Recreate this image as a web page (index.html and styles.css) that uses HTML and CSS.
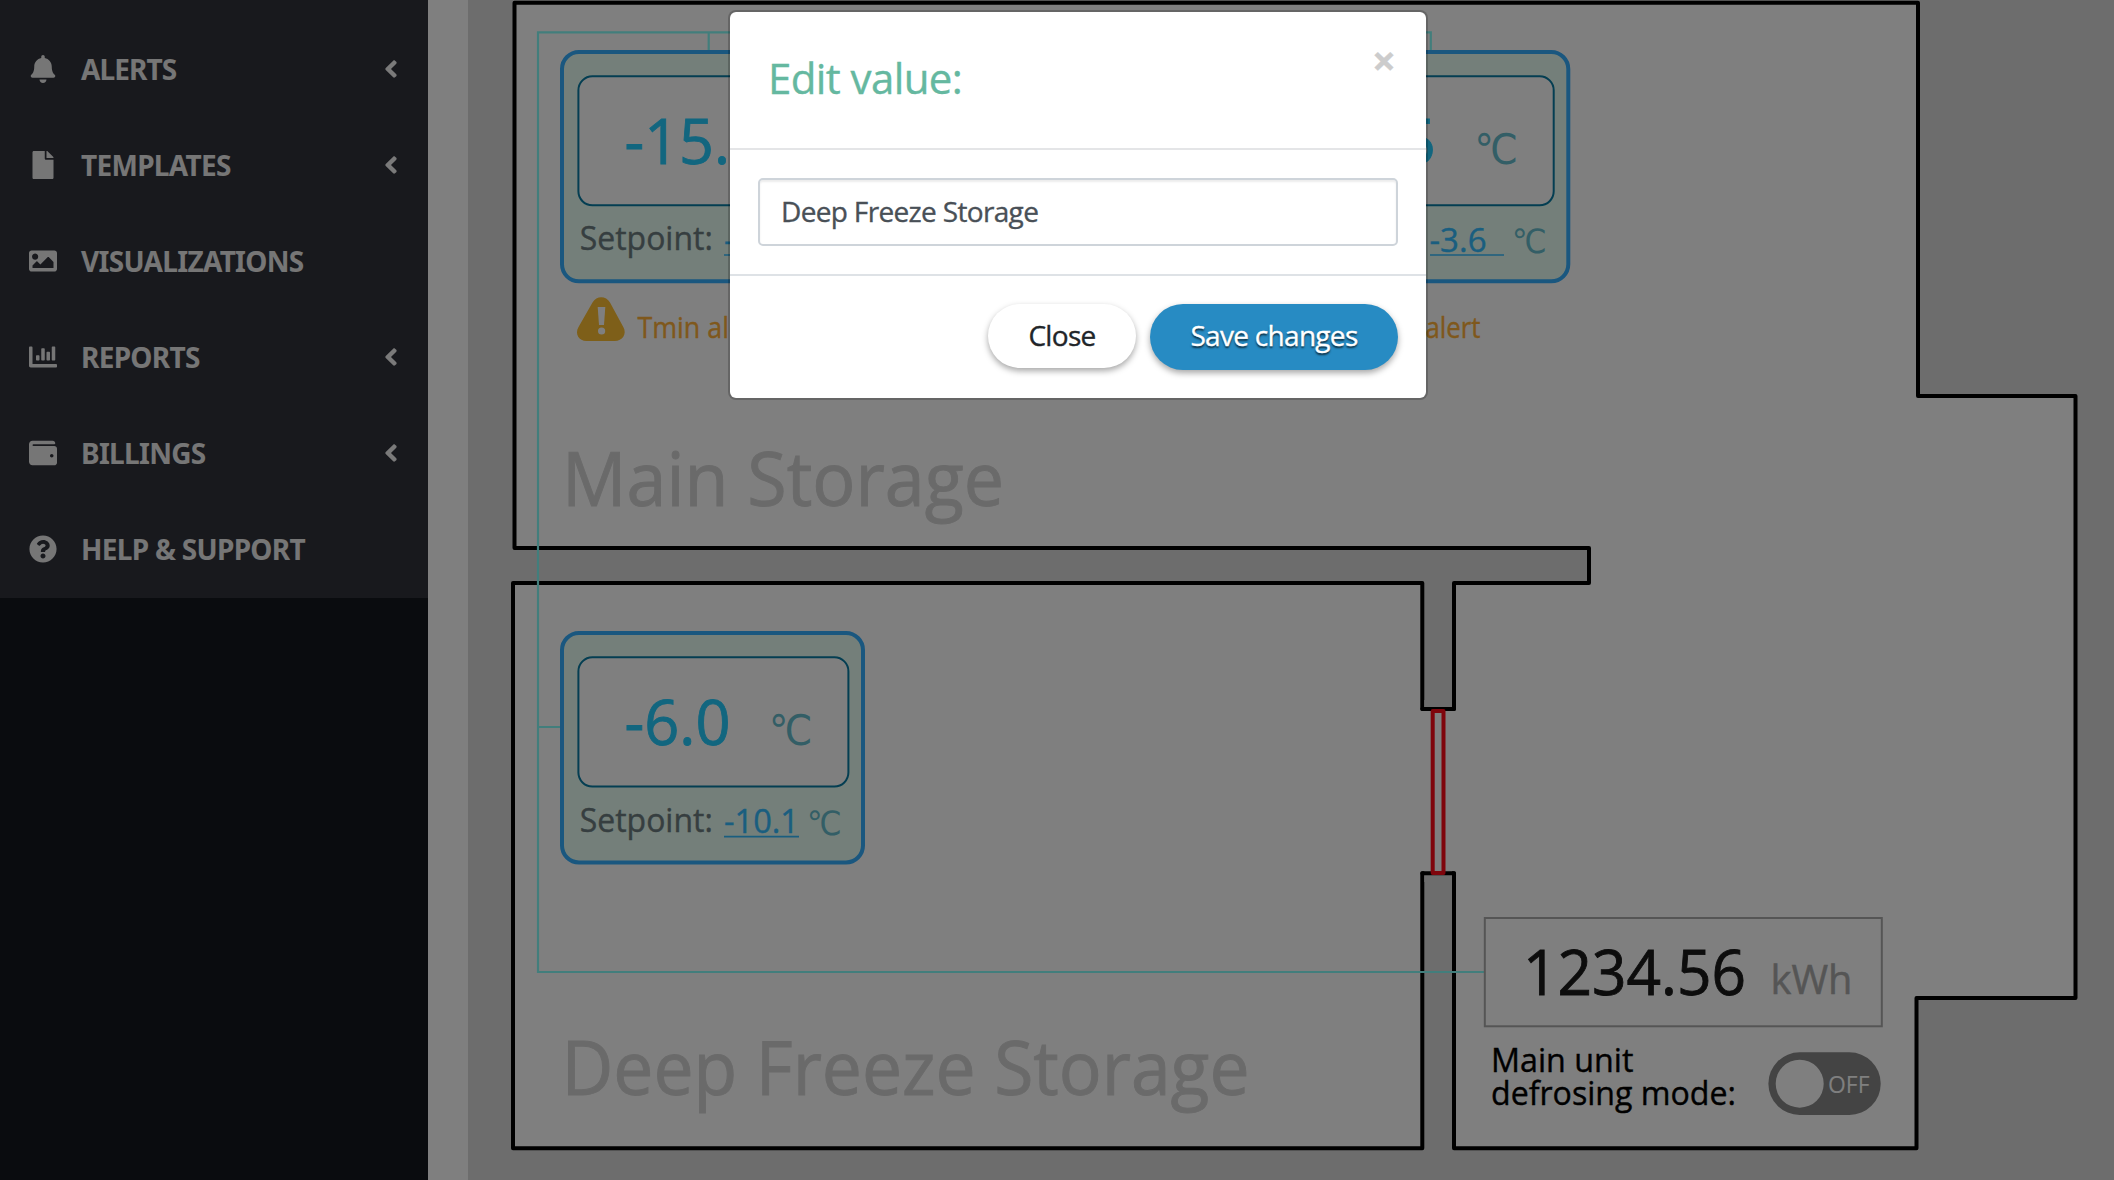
FILE: index.html
```html
<!DOCTYPE html>
<html lang="en">
<head>
<meta charset="utf-8">
<title>Visualizations</title>
<link rel="stylesheet" href="styles.css">
</head>
<body>
<div class="app">
  <aside class="sidebar">
    <nav class="menu">
      <a class="menu-item"><svg class="menu-icon" viewBox="0 0 448 512"><path d="M224 512c35.32 0 63.97-28.65 63.97-64H160.03c0 35.35 28.65 64 63.97 64zm215.39-149.71c-19.32-20.76-55.47-51.99-55.47-154.29 0-77.7-54.48-139.9-127.94-155.16V32c0-17.67-14.32-32-31.98-32s-31.98 14.33-31.98 32v20.84C118.56 68.1 64.08 130.3 64.08 208c0 102.3-36.15 133.53-55.47 154.29-6 6.45-8.66 14.16-8.61 21.71.11 16.4 12.98 32 32.1 32h383.8c19.12 0 32-15.6 32.1-32 .05-7.55-2.61-15.27-8.61-21.71z"/></svg><span class="menu-label menu-label-tight">ALERTS</span><svg class="chevron" viewBox="0 0 256 512"><path d="M31.7 239l136-136c9.4-9.4 24.6-9.4 33.9 0l22.6 22.6c9.4 9.4 9.4 24.6 0 33.9L127.9 256l96.4 96.4c9.4 9.4 9.4 24.6 0 33.9L201.7 409c-9.4 9.4-24.6 9.4-33.9 0l-136-136c-9.5-9.4-9.5-24.6-.1-34z"/></svg></a>
      <a class="menu-item"><svg class="menu-icon" viewBox="0 0 384 512"><path d="M224 136V0H24C10.7 0 0 10.7 0 24v464c0 13.3 10.7 24 24 24h336c13.3 0 24-10.7 24-24V160H248c-13.2 0-24-10.8-24-24zm160-14.1v6.1H256V0h6.1c6.4 0 12.5 2.5 17 7l97.9 98c4.5 4.5 7 10.6 7 16.9z"/></svg><span class="menu-label">TEMPLATES</span><svg class="chevron" viewBox="0 0 256 512"><path d="M31.7 239l136-136c9.4-9.4 24.6-9.4 33.9 0l22.6 22.6c9.4 9.4 9.4 24.6 0 33.9L127.9 256l96.4 96.4c9.4 9.4 9.4 24.6 0 33.9L201.7 409c-9.4 9.4-24.6 9.4-33.9 0l-136-136c-9.5-9.4-9.5-24.6-.1-34z"/></svg></a>
      <a class="menu-item"><svg class="menu-icon" viewBox="0 0 512 512"><path d="M464 448H48c-26.51 0-48-21.49-48-48V112c0-26.51 21.49-48 48-48h416c26.51 0 48 21.49 48 48v288c0 26.51-21.49 48-48 48zM112 120c-30.928 0-56 25.072-56 56s25.072 56 56 56 56-25.072 56-56-25.072-56-56-56zM64 384h384V272l-87.515-87.515c-4.686-4.686-12.284-4.686-16.971 0L208 320l-55.515-55.515c-4.686-4.686-12.284-4.686-16.971 0L64 336v48z"/></svg><span class="menu-label">VISUALIZATIONS</span></a>
      <a class="menu-item"><svg class="menu-icon" viewBox="0 0 512 512"><path d="M332.8 320h38.4c6.4 0 12.8-6.4 12.8-12.8V172.8c0-6.4-6.4-12.8-12.8-12.8h-38.4c-6.4 0-12.8 6.4-12.8 12.8v134.4c0 6.4 6.4 12.8 12.8 12.8zm96 0h38.4c6.4 0 12.8-6.4 12.8-12.8V76.8c0-6.4-6.4-12.8-12.8-12.8h-38.4c-6.4 0-12.8 6.4-12.8 12.8v230.4c0 6.4 6.4 12.8 12.8 12.8zm-288 0h38.4c6.4 0 12.8-6.4 12.8-12.8v-70.4c0-6.4-6.4-12.8-12.8-12.8h-38.4c-6.4 0-12.8 6.4-12.8 12.8v70.4c0 6.4 6.4 12.8 12.8 12.8zm96 0h38.4c6.4 0 12.8-6.4 12.8-12.8V108.8c0-6.4-6.4-12.8-12.8-12.8h-38.4c-6.4 0-12.8 6.4-12.8 12.8v198.4c0 6.4 6.4 12.8 12.8 12.8zM496 384H64V80c0-8.84-7.16-16-16-16H16C7.16 64 0 71.16 0 80v336c0 17.67 14.33 32 32 32h464c8.84 0 16-7.16 16-16v-32c0-8.84-7.16-16-16-16z"/></svg><span class="menu-label">REPORTS</span><svg class="chevron" viewBox="0 0 256 512"><path d="M31.7 239l136-136c9.4-9.4 24.6-9.4 33.9 0l22.6 22.6c9.4 9.4 9.4 24.6 0 33.9L127.9 256l96.4 96.4c9.4 9.4 9.4 24.6 0 33.9L201.7 409c-9.4 9.4-24.6 9.4-33.9 0l-136-136c-9.5-9.4-9.5-24.6-.1-34z"/></svg></a>
      <a class="menu-item"><svg class="menu-icon" viewBox="0 0 512 512"><path d="M461.2 128H80c-8.84 0-16-7.16-16-16s7.16-16 16-16h384c8.84 0 16-7.16 16-16 0-26.51-21.49-48-48-48H64C28.65 32 0 60.65 0 96v320c0 35.35 28.65 64 64 64h397.2c28.02 0 50.8-21.53 50.8-48V176c0-26.47-22.78-48-50.8-48zM416 336c-17.67 0-32-14.33-32-32s14.33-32 32-32 32 14.33 32 32-14.33 32-32 32z"/></svg><span class="menu-label">BILLINGS</span><svg class="chevron" viewBox="0 0 256 512"><path d="M31.7 239l136-136c9.4-9.4 24.6-9.4 33.9 0l22.6 22.6c9.4 9.4 9.4 24.6 0 33.9L127.9 256l96.4 96.4c9.4 9.4 9.4 24.6 0 33.9L201.7 409c-9.4 9.4-24.6 9.4-33.9 0l-136-136c-9.5-9.4-9.5-24.6-.1-34z"/></svg></a>
      <a class="menu-item"><svg class="menu-icon" viewBox="0 0 512 512"><path d="M504 256c0 136.997-111.043 248-248 248S8 392.997 8 256C8 119.083 119.043 8 256 8s248 111.083 248 248zM262.655 90c-54.497 0-89.255 22.957-116.549 63.758-3.536 5.286-2.353 12.415 2.715 16.258l34.699 26.31c5.205 3.947 12.621 3.008 16.665-2.122 17.864-22.658 30.113-35.797 57.303-35.797 20.429 0 45.698 13.148 45.698 32.958 0 14.976-12.363 22.667-32.534 33.976C247.128 238.528 216 254.941 216 296v4c0 6.627 5.373 12 12 12h56c6.627 0 12-5.373 12-12v-1.333c0-28.462 83.186-29.647 83.186-106.667 0-58.002-60.165-102-116.531-102zM256 338c-25.365 0-46 20.635-46 46 0 25.364 20.635 46 46 46s46-20.636 46-46c0-25.364-20.635-46-46-46z"/></svg><span class="menu-label">HELP &amp; SUPPORT</span></a>
    </nav>
  </aside>
  <main class="content">
    <svg class="plan" viewBox="468 0 1646 1180">
      <!-- rooms -->
      <path class="room" d="M514.5 2.8H1918V396H2075.5V998H1916.5V1148.3H1454V873.3H1422.3V1148.3H513V583H1422.3V709H1454V583H1589V548H514.5Z"/>
      <path class="gap" d="M1424.3 707H1452V875H1424.3Z"/>
      <path class="pillar" d="M1424.3 700H1452V709H1424.3ZM1424.3 873.3H1452V882H1424.3Z"/>
      <path class="wall" d="M1422.3 709H1454M1422.3 873.3H1454"/>
      <path class="gap" d="M1420.3 711.2H1432V871H1420.3ZM1444 711.2H1456V871H1444Z"/>
      <rect class="door" x="1432.7" y="711" width="10.8" height="162"/>

      <!-- wiring -->
      <path class="wire" d="M1484 972H538V32.3H1430.8V51M708.7 32.3V51M538 727H561"/>

      <!-- thermostat 1 -->
      <g>
        <rect class="unit" x="562" y="52" width="301" height="229.3" rx="17"/>
        <rect class="display" x="578.4" y="76.3" width="270" height="129" rx="14"/>
        <text class="value" x="624.5" y="164" textLength="140.5" lengthAdjust="spacingAndGlyphs">-15.0</text>
        <text class="label" x="579.8" y="250" textLength="133" lengthAdjust="spacingAndGlyphs">Setpoint:</text>
        <text class="setpoint" x="724" y="252" textLength="75" lengthAdjust="spacingAndGlyphs">-18.0</text>
        <path class="underline" d="M724 255H799"/>
      </g>
      <path class="warn" d="M592.5 302.5c4-7 13.5-7 17.5 0l13.3 24.5c4 7-1 14-8.5 14h-28.3c-7.5 0-12-7-8-14z"/>
      <path class="mark" d="M597.7 307h7.6l-1.3 18h-5z"/>
      <circle class="mark" cx="601.6" cy="331" r="3.6"/>
      <text class="alert" x="637.5" y="337.7" textLength="127" lengthAdjust="spacingAndGlyphs">Tmin alert</text>

      <!-- thermostat 2 -->
      <g>
        <rect class="unit" x="1267.3" y="52" width="301" height="229.3" rx="17"/>
        <rect class="display" x="1283.7" y="76.3" width="270" height="129" rx="14"/>
        <text class="value" x="1329.5" y="164" textLength="106.5" lengthAdjust="spacingAndGlyphs">-3.5</text>
        <text class="unit-big" x="1474.5" y="164" textLength="43.5" lengthAdjust="spacingAndGlyphs">℃</text>
        <text class="label" x="1285" y="250" textLength="133" lengthAdjust="spacingAndGlyphs">Setpoint:</text>
        <text class="setpoint" x="1429.5" y="252" textLength="57" lengthAdjust="spacingAndGlyphs">-3.6</text>
        <path class="underline" d="M1430 255H1504"/>
        <text class="unit-small" x="1512" y="253" textLength="34.5" lengthAdjust="spacingAndGlyphs">℃</text>
      </g>
      <text class="alert" x="1353" y="337.7" textLength="127.5" lengthAdjust="spacingAndGlyphs">Tmax alert</text>

      <!-- thermostat 3 -->
      <g>
        <rect class="unit" x="562" y="633" width="301" height="229.5" rx="17"/>
        <rect class="display" x="578.4" y="657.3" width="270" height="129.3" rx="14"/>
        <text class="value" x="624.5" y="745" textLength="106" lengthAdjust="spacingAndGlyphs">-6.0</text>
        <text class="unit-big" x="769" y="745" textLength="43.5" lengthAdjust="spacingAndGlyphs">℃</text>
        <text class="label" x="579.8" y="832" textLength="133" lengthAdjust="spacingAndGlyphs">Setpoint:</text>
        <text class="setpoint" x="724" y="833" textLength="75" lengthAdjust="spacingAndGlyphs">-10.1</text>
        <path class="underline" d="M724 836.7H799"/>
        <text class="unit-small" x="807" y="835" textLength="34.5" lengthAdjust="spacingAndGlyphs">℃</text>
      </g>

      <text class="room-name" x="562" y="506" textLength="442" lengthAdjust="spacingAndGlyphs">Main Storage</text>
      <text class="room-name" x="561.5" y="1095" textLength="688" lengthAdjust="spacingAndGlyphs">Deep Freeze Storage</text>

      <!-- energy meter -->
      <rect class="meter" x="1484.8" y="918" width="397" height="108.3"/>
      <text class="meter-value" x="1523" y="995" textLength="223" lengthAdjust="spacingAndGlyphs">1234.56</text>
      <text class="meter-unit" x="1770.5" y="993.7" textLength="82" lengthAdjust="spacingAndGlyphs">kWh</text>

      <!-- defrost switch -->
      <text class="note" x="1491" y="1072" textLength="142.5" lengthAdjust="spacingAndGlyphs">Main unit</text>
      <text class="note" x="1491" y="1104.7" textLength="245" lengthAdjust="spacingAndGlyphs">defrosing mode:</text>
      <rect class="switch" x="1768.4" y="1052.3" width="112.3" height="62.7" rx="31.3"/>
      <circle class="knob" cx="1799.7" cy="1083.7" r="24"/>
      <text class="off" x="1828" y="1092.7" textLength="41.5" lengthAdjust="spacingAndGlyphs">OFF</text>
    </svg>
  </main>
</div>

<div class="backdrop">
  <div class="modal">
    <header class="modal-header">
      <h4 class="modal-title">Edit value:</h4>
      <span class="close">×</span>
    </header>
    <div class="modal-body"><input class="field" type="text" value="Deep Freeze Storage"></div>
    <footer class="modal-footer">
      <button class="btn btn-close">Close</button>
      <button class="btn btn-save">Save changes</button>
    </footer>
  </div>
</div>
</body>
</html>
```
FILE: styles.css
```css
* { box-sizing: border-box; }
body {
  margin: 0;
  height: 1180px;
  overflow: hidden;
  background: #fff;
  font-family: "Open Sans", "Noto Sans", sans-serif;
}
.app { display: flex; height: 1180px; }

.sidebar { width: 428px; flex: none; background: #15181f; }
.menu { background: #30323b; padding-top: 22px; }
.menu-item {
  display: flex;
  align-items: center;
  height: 96px;
  padding: 0 30px 2px 29px;
  color: #ededed;
}
.menu-icon { width: 28px; height: 28px; fill: currentColor; margin-right: 24px; }
.menu-label {
  flex: 1;
  font: 700 28px/38px "Noto Sans", sans-serif;
  letter-spacing: -.7px;
  white-space: nowrap;
}
.menu-label-tight { letter-spacing: -.9px; }
.chevron { width: 14px; height: 28px; fill: #f5f5f5; }

.content { flex: 1; padding-left: 40px; }
.plan { display: block; width: 1646px; height: 1180px; background: #dbdbdb; }
.room { fill: #fff; stroke: #000; stroke-width: 4; stroke-linejoin: round; }
.gap { fill: #fff; }
.pillar { fill: #dbdbdb; }
.wall { fill: none; stroke: #000; stroke-width: 4; stroke-linecap: round; }
.door { fill: #fff; stroke: #fe0a18; stroke-width: 4; stroke-linejoin: round; }
.wire { fill: none; stroke: #84fdf8; stroke-width: 2.2; }
.unit { fill: #e8fff4; stroke: #34aeff; stroke-width: 4; }
.display { fill: #fff; stroke: #087ca4; stroke-width: 2; }
.value { font-size: 62.5px; fill: #24ccff; stroke: #24ccff; stroke-width: .9; }
.unit-big, .unit-small { font-family: "DejaVu Sans", sans-serif; fill: #66bccc; }
.unit-big { font-size: 42px; }
.unit-small { font-size: 33.5px; }
.label { font-size: 33px; fill: #6c7c80; stroke: #6c7c80; stroke-width: .4; }
.setpoint { font-size: 33px; fill: #34bcff; stroke: #34bcff; stroke-width: .4; }
.underline { fill: none; stroke: #34bcff; stroke-width: 1.7; }
.warn { fill: #fcbe32; }
.mark { fill: #fff; }
.alert { font-size: 28.5px; fill: #ffb038; stroke: #ffb038; stroke-width: .4; }
.room-name { font-size: 75px; fill: #d5d5d5; stroke: #d5d5d5; stroke-width: 1; }
.meter { fill: none; stroke: #aaa; stroke-width: 2; }
.meter-value { font-size: 62.5px; fill: #1a1a1a; stroke: #1a1a1a; stroke-width: .9; }
.meter-unit { font-size: 41px; fill: #aaa; stroke: #aaa; stroke-width: .5; }
.note { font-size: 33px; fill: #000; stroke: #000; stroke-width: .4; }
.switch { fill: #888; }
.knob { fill: #fff; }
.off { font-size: 23.5px; fill: #fff; }

.backdrop {
  position: absolute;
  inset: 0;
  display: flex;
  align-items: flex-start;
  padding: 10px 0 0 728px;
  background: rgba(0, 0, 0, .5);
}
.modal {
  width: 700px;
  height: 390px;
  border: 2px solid rgba(0, 0, 0, .2);
  border-radius: 8px;
  background: #fff;
  background-clip: padding-box;
  -webkit-text-stroke-width: .35px;
}
.modal-header {
  display: flex;
  justify-content: space-between;
  height: 138px;
  padding: 37px 30px 0 38px;
  border-bottom: 2px solid #e4e5e7;
}
.modal-title {
  margin: 0;
  font-size: 42px;
  line-height: 58px;
  font-weight: 400;
  letter-spacing: -.6px;
  color: #65b8a0;
}
.close { font-size: 42px; line-height: 22px; font-weight: 700; color: #ccc; }
.modal-body { padding: 28px; height: 124px; }
.field {
  display: block;
  width: 640px;
  height: 68px;
  padding: 0 21px 2px;
  border: 2px solid #ced4da;
  border-radius: 5px;
  box-shadow: inset 0 2px 2px rgba(0, 0, 0, .075);
  font: inherit;
  font-size: 28px;
  letter-spacing: -.66px;
  color: #495057;
  outline: none;
}
.modal-footer {
  display: flex;
  justify-content: flex-end;
  align-items: flex-start;
  gap: 14px;
  height: 124px;
  padding: 28px;
  border-top: 2px solid #dee2e6;
}
.btn {
  border: 0;
  border-radius: 32px;
  padding: 0 0 2px;
  height: 64px;
  font: inherit;
  font-size: 28px;
  letter-spacing: -.7px;
  white-space: nowrap;
  box-shadow: 0 3px 6px rgba(0, 0, 0, .35);
}
.btn-close { width: 148px; background: #fff; color: #212529; }
.btn-save {
  width: 248px;
  height: 66px;
  padding-bottom: 4px;
  border-radius: 33px;
  background: #278bc3;
  color: #fff;
  text-shadow: 0 2px 2px rgba(0, 0, 0, .7);
}
```
